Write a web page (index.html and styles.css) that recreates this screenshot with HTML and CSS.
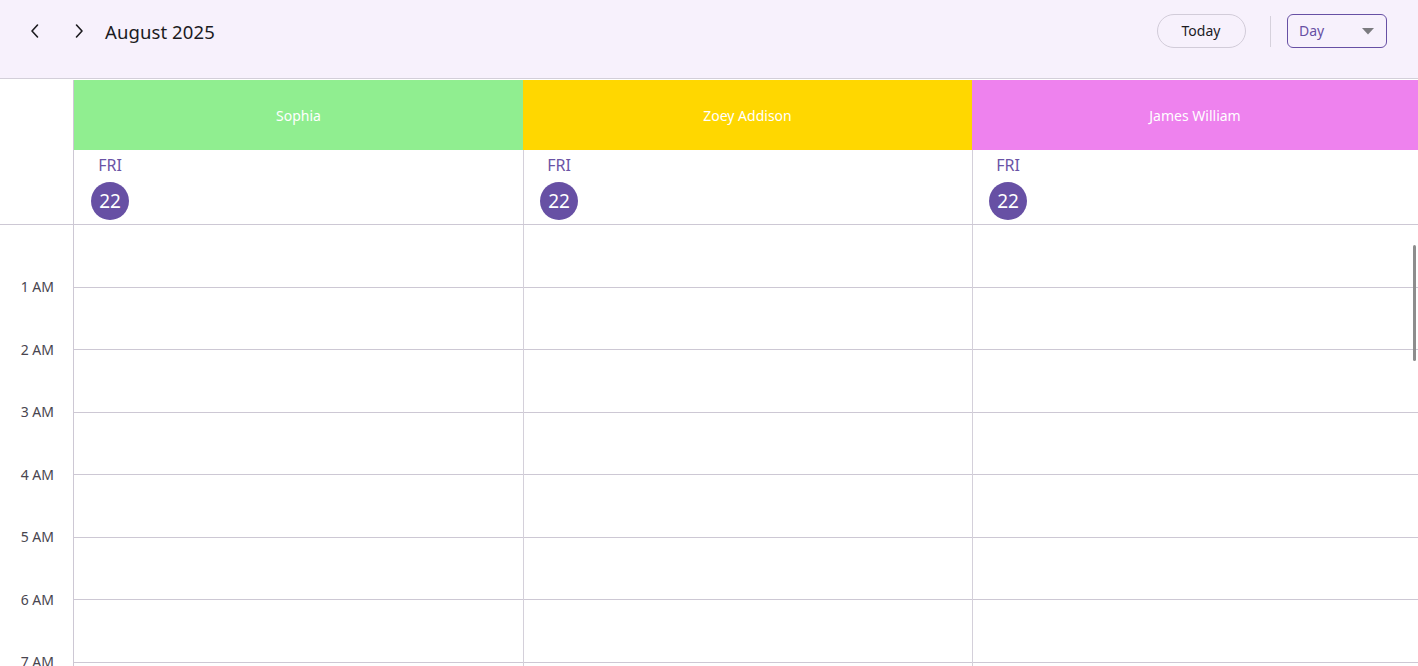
FILE: index.html
```html
<!DOCTYPE html>
<html>
<head>
<meta charset="utf-8">
<link rel="stylesheet" href="styles.css">
</head>
<body>
<div class="app">
  <header class="toolbar">
    <div class="nav">
      <button class="chev" aria-label="Previous">
        <svg width="10" height="16" viewBox="0 0 10 16"><polyline points="7.5,2 2,8 7.5,14" fill="none" stroke="#1c1b1f" stroke-width="1.6" stroke-linecap="round" stroke-linejoin="round"/></svg>
      </button>
      <button class="chev" aria-label="Next">
        <svg width="10" height="16" viewBox="0 0 10 16"><polyline points="2.5,2 8,8 2.5,14" fill="none" stroke="#1c1b1f" stroke-width="1.6" stroke-linecap="round" stroke-linejoin="round"/></svg>
      </button>
      <span class="title">August 2025</span>
    </div>
    <div class="actions">
      <button class="today">Today</button>
      <span class="divider"></span>
      <div class="select">
        <span>Day</span>
        <svg width="12" height="7" viewBox="0 0 12 7"><polygon points="0,0 12,0 6,6.5" fill="#7b7b7f"/></svg>
      </div>
    </div>
  </header>

  <div class="calendar">
    <div class="head">
      <div class="corner"></div>
      <div class="rescol">
        <div class="resource green">Sophia</div>
        <div class="dateCell"><div class="date"><span class="dow">FRI</span><span class="day">22</span></div></div>
      </div>
      <div class="rescol">
        <div class="resource yellow">Zoey Addison</div>
        <div class="dateCell"><div class="date"><span class="dow">FRI</span><span class="day">22</span></div></div>
      </div>
      <div class="rescol">
        <div class="resource pink">James William</div>
        <div class="dateCell"><div class="date"><span class="dow">FRI</span><span class="day">22</span></div></div>
      </div>
    </div>

    <div class="body">
      <div class="gutter">
        <div class="tl">1 AM</div>
        <div class="tl">2 AM</div>
        <div class="tl">3 AM</div>
        <div class="tl">4 AM</div>
        <div class="tl">5 AM</div>
        <div class="tl">6 AM</div>
        <div class="tl">7 AM</div>
        <div class="tl">8 AM</div>
      </div>
      <div class="col">
        <div class="slot"></div><div class="slot"></div><div class="slot"></div><div class="slot"></div>
        <div class="slot"></div><div class="slot"></div><div class="slot"></div><div class="slot"></div>
      </div>
      <div class="col">
        <div class="slot"></div><div class="slot"></div><div class="slot"></div><div class="slot"></div>
        <div class="slot"></div><div class="slot"></div><div class="slot"></div><div class="slot"></div>
      </div>
      <div class="col">
        <div class="slot"></div><div class="slot"></div><div class="slot"></div><div class="slot"></div>
        <div class="slot"></div><div class="slot"></div><div class="slot"></div><div class="slot"></div>
      </div>
      <div class="scrollbar"></div>
    </div>
  </div>
</div>
</body>
</html>
```

FILE: styles.css
```css
* { box-sizing: border-box; }
html, body { margin: 0; padding: 0; }
body {
  font-family: "Noto Sans", "Open Sans", sans-serif;
  color: #1c1b1f;
  background: #ffffff;
  width: 1418px;
  height: 666px;
  overflow: hidden;
}
.app { display: flex; flex-direction: column; height: 666px; }

.toolbar {
  height: 79px;
  flex: none;
  background: #f7f1fc;
  border-bottom: 1px solid #d3cfd9;
  display: flex;
  justify-content: space-between;
  align-items: flex-start;
  padding: 14px 31px 0 25px;
}
.nav { display: flex; align-items: center; height: 34px; }
.chev {
  width: 20px; height: 28px;
  border: none; background: transparent; padding: 0;
  display: flex; align-items: center; justify-content: center;
  margin-right: 24px;
}
.chev + .chev { margin-right: 16px; }
.title { font-size: 18.5px; letter-spacing: 0.1px; color: #1c1b1f; }

.actions { display: flex; align-items: center; height: 34px; }
.today {
  width: 89px; height: 34px;
  border: 1px solid #d2ccd9;
  border-radius: 17px;
  background: transparent;
  font-family: inherit;
  font-size: 14px;
  color: #1c1b1f;
  padding: 0 0 2px;
}
.divider { width: 1.5px; height: 31px; background: #d6d1dc; margin: 0 16px 0 24px; }
.select {
  width: 100px; height: 34px;
  border: 1px solid #6750a4;
  border-radius: 6px;
  display: flex; align-items: center; justify-content: space-between;
  padding: 0 12px 0 11px;
  color: #6750a4;
  font-size: 14px;
}
.select span { padding-bottom: 1px; }

.calendar { flex: 1; display: flex; flex-direction: column; overflow: hidden; }

.head {
  display: grid;
  grid-template-columns: 74px 449px 449px 1fr;
  border-bottom: 1px solid #cdc8d4;
  padding-top: 1px;
}
.corner { border-right: 1px solid #cdc8d4; }
.rescol { display: flex; flex-direction: column; }
.resource {
  height: 70px;
  display: flex; align-items: center; justify-content: center;
  color: #ffffff;
  font-size: 14px;
  padding-top: 1px;
}
.green { background: #90ee90; }
.yellow { background: #ffd700; }
.pink { background: #ee82ee; }
.dateCell {
  height: 74px;
  padding: 3px 0 0 17px;
}
.rescol + .rescol .dateCell { border-left: 1px solid #d4d0da; padding-left: 16px; }
.date { width: 38px; display: flex; flex-direction: column; align-items: center; }
.dow { font-size: 16px; color: #6a53a6; line-height: 24px; }
.day {
  width: 38px; height: 38px; border-radius: 50%;
  background: #6750a4; color: #ffffff;
  font-size: 19px;
  display: flex; align-items: center; justify-content: center;
  margin-top: 5px;
  padding-bottom: 1px;
}

.body {
  position: relative;
  flex: 1;
  display: grid;
  grid-template-columns: 74px 449px 449px 1fr;
  overflow: hidden;
}
.gutter {
  border-right: 1px solid #cdc8d4;
  padding-top: 31px;
}
.tl {
  height: 62.5px;
  line-height: 62.5px;
  text-align: right;
  padding-right: 19px;
  font-size: 14px;
  color: #49454f;
}
.col + .col { border-left: 1px solid #d4d0da; }
.slot { height: 62.5px; border-bottom: 1px solid #cdc8d4; }

.scrollbar {
  position: absolute;
  right: 2px;
  top: 20px;
  width: 3px;
  height: 116px;
  border-radius: 2px;
  background: #8d8d8d;
}
```
